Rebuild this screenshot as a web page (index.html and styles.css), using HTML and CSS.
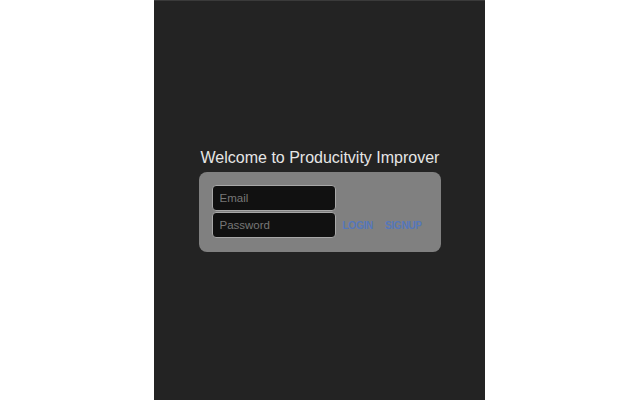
FILE: index.html
```
<!DOCTYPE html>
<html>
<head>
<meta charset="utf-8">
<link rel="stylesheet" href="styles.css">
</head>
<body>
<div class="panel">
  <h1 class="title">Welcome to Producitvity Improver</h1>
  <div class="box">
    <div class="fields">
      <input class="field" type="text" placeholder="Email">
      <input class="field" type="password" placeholder="Password">
    </div>
    <div class="links">
      <a class="link" href="#">LOGIN</a>
      <a class="link" href="#">SIGNUP</a>
    </div>
  </div>
</div>
</body>
</html>
```
FILE: styles.css
```
html, body {
  margin: 0;
  padding: 0;
  background: #ffffff;
  font-family: "Liberation Sans", Arial, sans-serif;
}
.panel {
  width: 331px;
  height: 400px;
  box-sizing: border-box;
  margin: 0 0 0 154px;
  padding-top: 148px;
  background: #232323;
  border-top: 1px solid #3a3a3a;
  display: flex;
  flex-direction: column;
  align-items: center;
}
.title {
  margin: 0 0 5px 1px;
  font-size: 16px;
  line-height: 18px;
  font-weight: normal;
  color: #e6e6e6;
  white-space: nowrap;
}
.box {
  width: 242px;
  box-sizing: border-box;
  padding: 13px 18px 14px 13px;
  background: #808080;
  border-radius: 8px;
  display: flex;
  align-items: flex-end;
  gap: 7px;
}
.fields {
  display: flex;
  flex-direction: column;
  gap: 1px;
}
.field {
  width: 124px;
  height: 26px;
  box-sizing: border-box;
  margin: 0;
  padding: 0 7px;
  background: #111111;
  border: 1px solid #a8a8a8;
  border-radius: 4px;
  color: #dddddd;
  font-family: "Liberation Sans", Arial, sans-serif;
  font-size: 11.5px;
  outline: none;
}
.field::placeholder {
  color: #777777;
}
.links {
  height: 26px;
  display: flex;
  align-items: center;
  gap: 12px;
}
.link {
  font-size: 10px;
  font-weight: bold;
  letter-spacing: -0.25px;
  color: #5577bb;
  text-decoration: none;
}
```
